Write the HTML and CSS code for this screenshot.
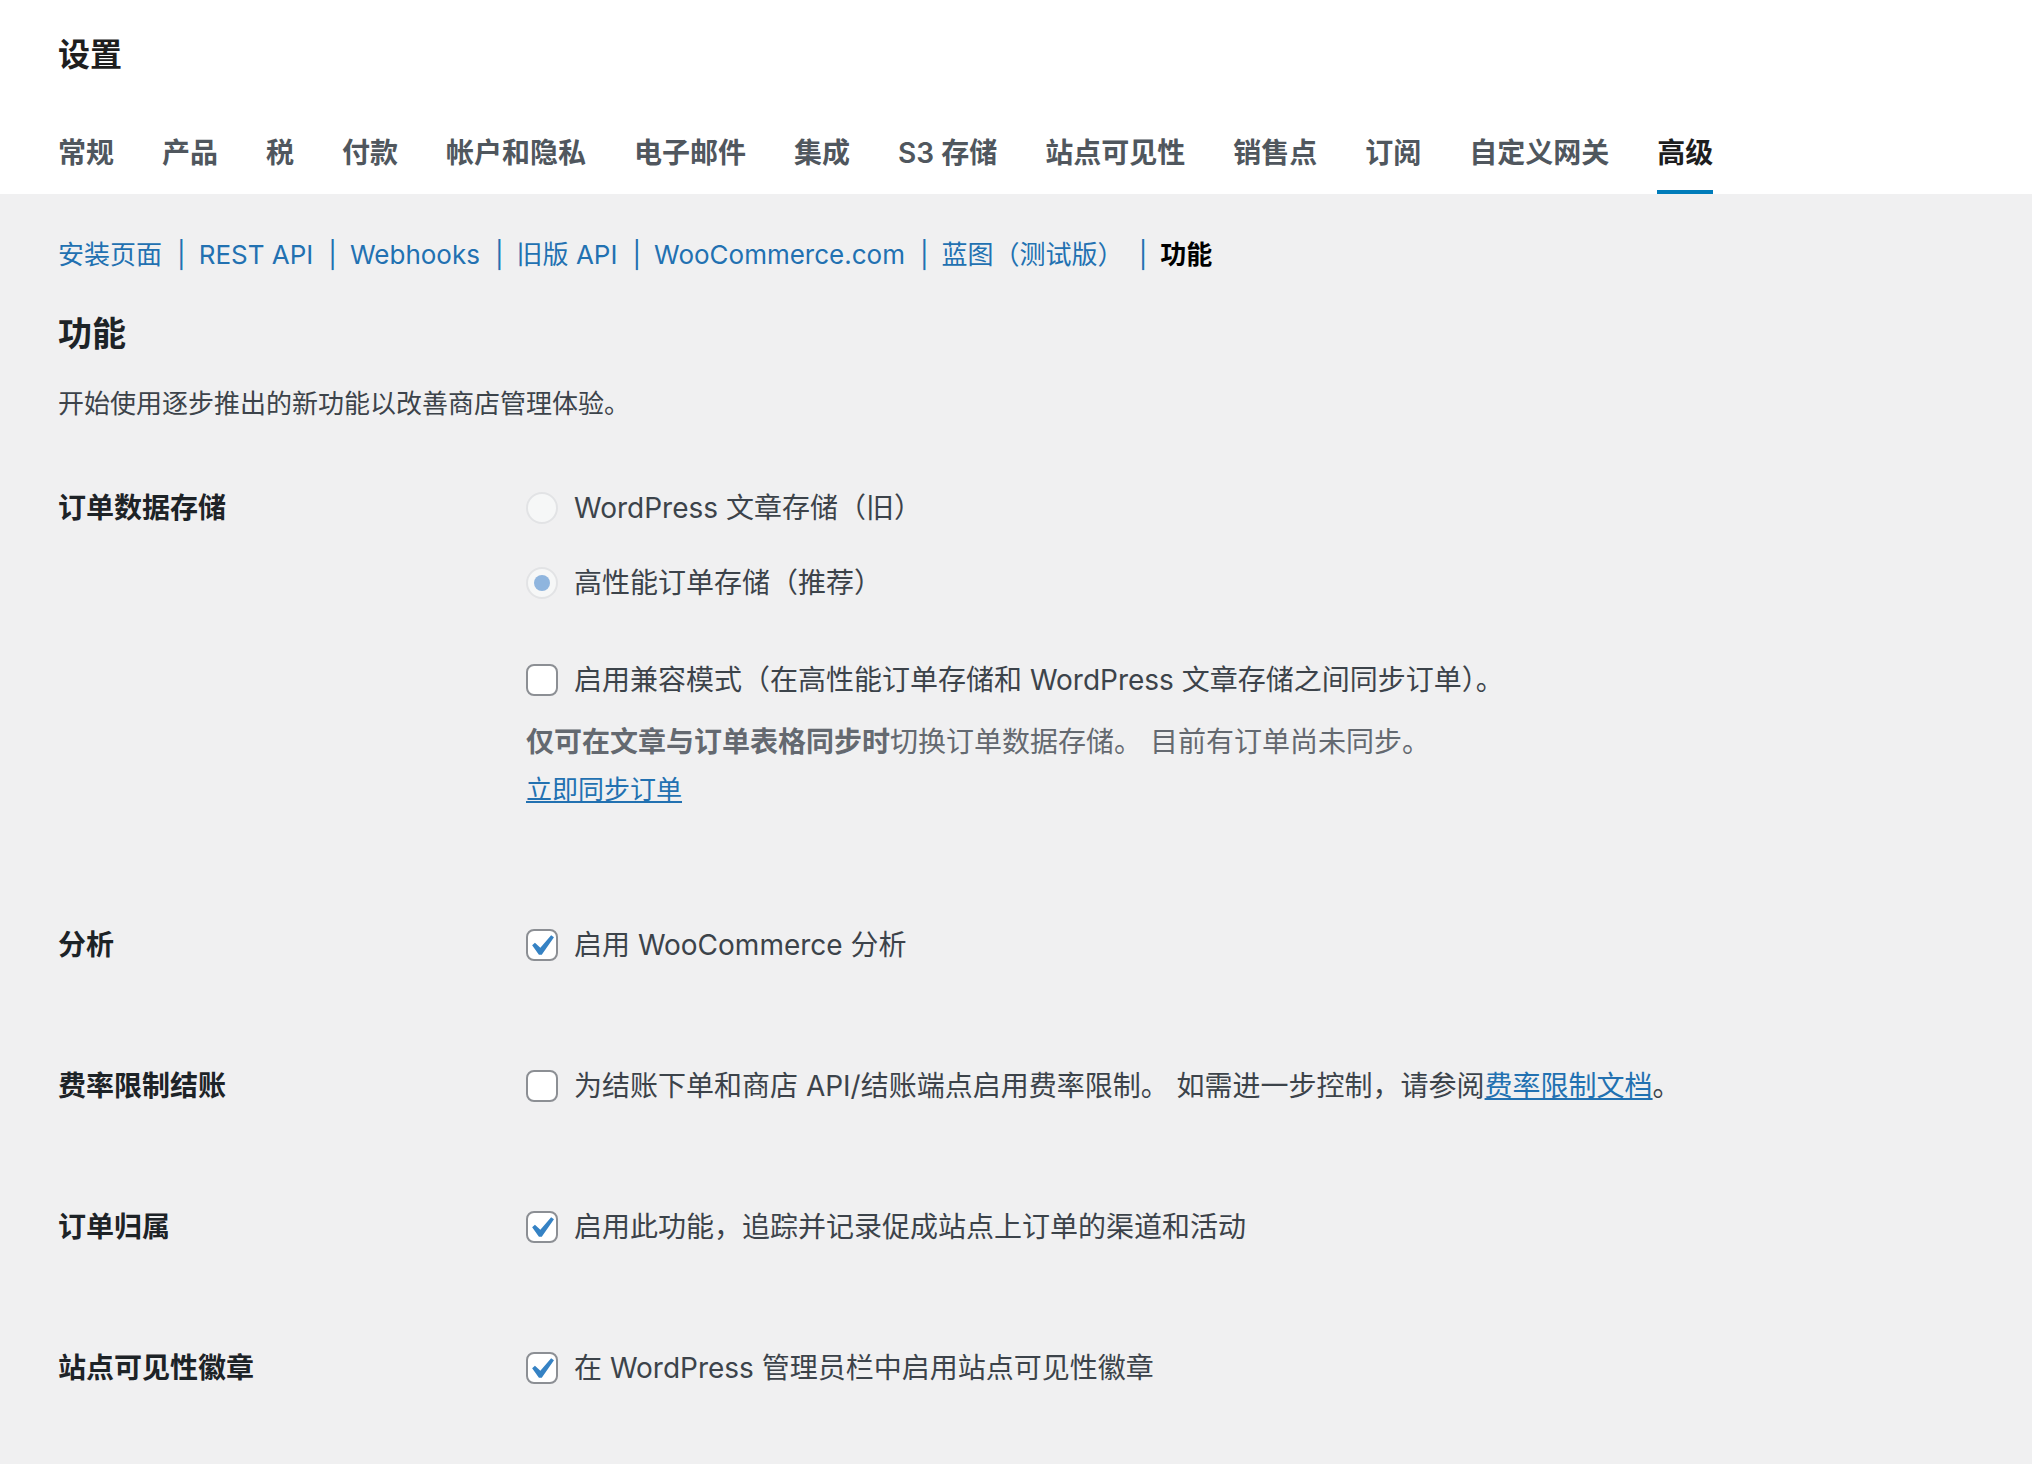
FILE: index.html
```html
<!DOCTYPE html>
<html lang="zh-CN">
<head>
    <meta charset="utf-8">
    <title>设置 ‹ 高级 ‹ WooCommerce</title>
    <link rel="stylesheet" href="styles.css">
</head>
<body>
    <header class="page-header">
        <h1 class="page-title">设置</h1>
        <nav class="tabs">
            <a class="tab" href="#">常规</a>
            <a class="tab" href="#">产品</a>
            <a class="tab" href="#">税</a>
            <a class="tab" href="#">付款</a>
            <a class="tab" href="#">帐户和隐私</a>
            <a class="tab" href="#">电子邮件</a>
            <a class="tab" href="#">集成</a>
            <a class="tab" href="#">S3 存储</a>
            <a class="tab" href="#">站点可见性</a>
            <a class="tab" href="#">销售点</a>
            <a class="tab" href="#">订阅</a>
            <a class="tab" href="#">自定义网关</a>
            <a class="tab tab-active" href="#">高级</a>
        </nav>
    </header>

    <main class="content">
        <ul class="subnav">
            <li><a href="#">安装页面</a><span class="sep">|</span></li>
            <li><a href="#">REST API</a><span class="sep">|</span></li>
            <li><a href="#">Webhooks</a><span class="sep">|</span></li>
            <li><a href="#">旧版 API</a><span class="sep">|</span></li>
            <li><a href="#">WooCommerce.com</a><span class="sep">|</span></li>
            <li><a href="#">蓝图（测试版）</a><span class="sep">|</span></li>
            <li><span class="current">功能</span></li>
        </ul>

        <h2 class="section-title">功能</h2>
        <p class="section-desc">开始使用逐步推出的新功能以改善商店管理体验。</p>

        <div class="settings">
            <div class="setting setting-storage">
                <div class="setting-label">订单数据存储</div>
                <div class="setting-field">
                    <label class="option option-radio">
                        <span class="control radio"></span>
                        WordPress 文章存储（旧）
                    </label>
                    <label class="option option-radio">
                        <span class="control radio"><span class="radio-dot"></span></span>
                        高性能订单存储（推荐）
                    </label>
                    <label class="option option-compat">
                        <span class="control checkbox"></span>
                        启用兼容模式（在高性能订单存储和 WordPress 文章存储之间同步订单）。
                    </label>
                    <p class="field-desc"><b>仅可在文章与订单表格同步时</b>切换订单数据存储。 目前有订单尚未同步。</p>
                    <p class="field-link"><a href="#">立即同步订单</a></p>
                </div>
            </div>

            <div class="setting">
                <div class="setting-label">分析</div>
                <div class="setting-field">
                    <label class="option">
                        <span class="control checkbox">
                            <svg class="check" viewBox="3.81 2.86 13.33 13.33"><path d="M14.83 4.89l1.34.94-5.81 8.38H9.02L5.78 9.67l1.34-1.25 2.57 2.4z"/></svg>
                        </span>
                        启用 WooCommerce 分析
                    </label>
                </div>
            </div>

            <div class="setting">
                <div class="setting-label">费率限制结账</div>
                <div class="setting-field">
                    <label class="option">
                        <span class="control checkbox"></span>
                        <span>为结账下单和商店 API/结账端点启用费率限制。 如需进一步控制，请参阅<a href="#">费率限制文档</a>。</span>
                    </label>
                </div>
            </div>

            <div class="setting">
                <div class="setting-label">订单归属</div>
                <div class="setting-field">
                    <label class="option">
                        <span class="control checkbox">
                            <svg class="check" viewBox="3.81 2.86 13.33 13.33"><path d="M14.83 4.89l1.34.94-5.81 8.38H9.02L5.78 9.67l1.34-1.25 2.57 2.4z"/></svg>
                        </span>
                        启用此功能，追踪并记录促成站点上订单的渠道和活动
                    </label>
                </div>
            </div>

            <div class="setting">
                <div class="setting-label">站点可见性徽章</div>
                <div class="setting-field">
                    <label class="option">
                        <span class="control checkbox">
                            <svg class="check" viewBox="3.81 2.86 13.33 13.33"><path d="M14.83 4.89l1.34.94-5.81 8.38H9.02L5.78 9.67l1.34-1.25 2.57 2.4z"/></svg>
                        </span>
                        在 WordPress 管理员栏中启用站点可见性徽章
                    </label>
                </div>
            </div>
        </div>
    </main>
</body>
</html>
```

FILE: styles.css
```css
body {
    margin: 0;
    background: #f0f0f1;
    font-family: Inter, "Noto Sans CJK SC", sans-serif;
    color: #3c434a;
}

.page-header {
    box-sizing: border-box;
    height: 194px;
    padding: 31px 58px 0;
    background: #fff;
}

.page-title {
    margin: 0;
    font-size: 32px;
    line-height: 48px;
    font-weight: 600;
    color: #1e1e1e;
}

.tabs {
    display: flex;
    gap: 48px;
    margin-top: 54px;
}

.tab {
    font-size: 28px;
    line-height: 40px;
    padding-bottom: 17px;
    border-bottom: 4px solid transparent;
    font-weight: 600;
    color: #50575e;
    text-decoration: none;
}

.tab-active {
    color: #1e1e1e;
    border-bottom-color: #007cba;
}

.content {
    padding: 43px 58px 0;
}

.subnav {
    display: flex;
    margin: 0;
    padding: 0;
    list-style: none;
    font-size: 26px;
    line-height: 36px;
    color: #2271b1;
}

.subnav a {
    color: #2271b1;
    text-decoration: none;
}

.sep {
    padding: 0 13px 0 15px;
}

.current {
    color: #000;
    font-weight: 600;
}

.section-title {
    margin: 39px 0 0;
    font-size: 34px;
    line-height: 44px;
    font-weight: 600;
    color: #1d2327;
}

.section-desc {
    margin: 30px 0 0;
    font-size: 26px;
    line-height: 36px;
}

.settings {
    margin-top: 68px;
}

.setting {
    display: flex;
    padding-bottom: 105px;
}

.setting-storage {
    padding-bottom: 119px;
}

.setting-label {
    flex: none;
    width: 468px;
    font-size: 28px;
    line-height: 36px;
    font-weight: 600;
    color: #1d2327;
}

.setting-field {
    font-size: 28px;
    line-height: 36px;
}

.option {
    display: flex;
    align-items: center;
    gap: 16px;
}

.option-radio + .option-radio {
    margin-top: 39px;
}

.option-compat {
    margin-top: 61px;
}

.option a {
    color: #2271b1;
    text-decoration: underline;
}

.control {
    box-sizing: border-box;
    flex: none;
    width: 32px;
    height: 32px;
    display: flex;
    align-items: center;
    justify-content: center;
}

.radio {
    border: 2px solid #e2e3e5;
    border-radius: 50%;
    background: #f6f7f7;
}

.radio-dot {
    width: 16px;
    height: 16px;
    border-radius: 50%;
    background: #8fb5de;
}

.checkbox {
    border: 2px solid #8c8f94;
    border-radius: 8px;
    background: #fff;
}

.check {
    width: 28px;
    height: 28px;
    fill: #3582c4;
}

.field-desc {
    margin: 26px 0 0;
    font-size: 28px;
    line-height: 36px;
    color: #646970;
}

.field-desc b {
    font-weight: 600;
}

.field-link {
    margin: 12px 0 0;
    font-size: 26px;
    line-height: 36px;
}

.field-link a {
    color: #2271b1;
    text-decoration: underline;
}
```
